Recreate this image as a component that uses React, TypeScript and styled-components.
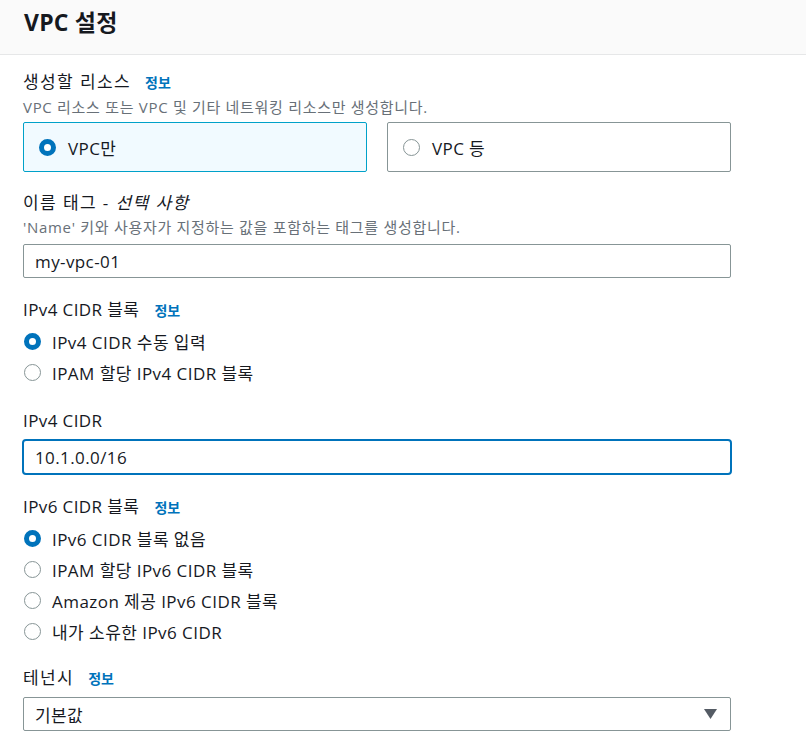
import React from "react";
import styled, { createGlobalStyle } from "styled-components";

const Global = createGlobalStyle`
  html, body { margin: 0; padding: 0; background: #ffffff; }
  body { font-family: "Open Sans", "Noto Sans CJK KR", sans-serif; color: #16191f; }
  * { box-sizing: border-box; }
`;

const Page = styled.div`
  width: 806px;
  min-height: 748px;
  background: #fff;
`;

const Header = styled.div`
  height: 55px;
  background: #fafafa;
  border-bottom: 1px solid #e6e7e8;
  padding: 4px 24px 0;
`;

const Title = styled.h2`
  margin: 0;
  font-size: 23px;
  font-weight: 700;
  line-height: 36px;
  letter-spacing: 0.2px;
  color: #16191f;
`;

const Body = styled.div`
  width: 731px;
  padding: 14px 0 0 23px;
  display: flex;
  flex-direction: column;
`;

const Field = styled.div<{ $gap?: number }>`
  display: flex;
  flex-direction: column;
  margin-bottom: ${(p) => p.$gap ?? 19}px;
`;

const LabelRow = styled.div<{ $wide?: boolean }>`
  display: flex;
  align-items: baseline;
  gap: ${(p) => (p.$wide ? 14 : 15)}px;
  font-size: 17px;
  font-weight: 400;
  letter-spacing: ${(p) => (p.$wide ? 1.4 : 0.4)}px;
  line-height: 26px;
  color: #16191f;
`;

const Optional = styled.i`
  font-style: italic;
`;

const Info = styled.a`
  font-size: 14px;
  font-weight: 600;
  letter-spacing: 0;
  color: #0073bb;
  text-decoration: none;
`;

const Desc = styled.div<{ $after?: number }>`
  font-size: 15px;
  letter-spacing: 0.7px;
  line-height: 22px;
  color: #687078;
  margin-bottom: ${(p) => p.$after ?? 6}px;
`;

const Tiles = styled.div`
  display: grid;
  grid-template-columns: 1fr 1fr;
  gap: 20px;
`;

const Tile = styled.div<{ $selected?: boolean }>`
  height: 50px;
  display: flex;
  align-items: center;
  gap: 12px;
  padding-left: 15px;
  border: 1px solid ${(p) => (p.$selected ? "#00a1c9" : "#879596")};
  background: ${(p) => (p.$selected ? "#f1faff" : "#fff")};
  border-radius: 2px;
  font-size: 17px;
  letter-spacing: 0.4px;
`;

const Radio = styled.span<{ $checked?: boolean }>`
  width: 17px;
  height: 17px;
  border-radius: 50%;
  flex: none;
  border: ${(p) => (p.$checked ? "5px solid #0073bb" : "1.5px solid #879596")};
  background: #fff;
`;

const RadioList = styled.div`
  display: flex;
  flex-direction: column;
  margin-top: 2px;
`;

const RadioRow = styled.div`
  display: flex;
  align-items: center;
  gap: 11px;
  height: 31px;
  font-size: 17px;
  letter-spacing: 0.45px;
  padding-left: 1px;
`;

const Input = styled.div<{ $focused?: boolean }>`
  height: ${(p) => (p.$focused ? 36 : 34)}px;
  margin: ${(p) => (p.$focused ? "0 -1px" : "0")};
  border: ${(p) => (p.$focused ? "2px solid #0073bb" : "1px solid #879596")};
  border-radius: ${(p) => (p.$focused ? 4 : 2)}px;
  display: flex;
  align-items: center;
  padding-left: 11px;
  font-size: 17px;
  letter-spacing: 0.4px;
  color: #16191f;
`;

const Select = styled(Input)`
  justify-content: space-between;
  padding-right: 13px;
`;

const Caret = styled.svg`
  width: 13px;
  height: 10px;
`;

const Spacer = styled.div`
  height: 5px;
`;

export default function App() {
  return (
    <Page>
      <Global />
      <Header>
        <Title>VPC 설정</Title>
      </Header>
      <Body>
        <Field $gap={18}>
          <LabelRow $wide>
            생성할 리소스 <Info>정보</Info>
          </LabelRow>
          <Desc $after={4}>VPC 리소스 또는 VPC 및 기타 네트워킹 리소스만 생성합니다.</Desc>
          <Tiles>
            <Tile $selected>
              <Radio $checked />
              VPC만
            </Tile>
            <Tile>
              <Radio />
              VPC 등
            </Tile>
          </Tiles>
        </Field>
        <Field>
          <LabelRow $wide>
            <span>
              이름 태그 - <Optional>선택 사항</Optional>
            </span>
          </LabelRow>
          <Desc>'Name' 키와 사용자가 지정하는 값을 포함하는 태그를 생성합니다.</Desc>
          <Input>my-vpc-01</Input>
        </Field>
        <Field $gap={20}>
          <LabelRow>
            IPv4 CIDR 블록 <Info>정보</Info>
          </LabelRow>
          <RadioList>
            <RadioRow>
              <Radio $checked />
              IPv4 CIDR 수동 입력
            </RadioRow>
            <RadioRow>
              <Radio />
              IPAM 할당 IPv4 CIDR 블록
            </RadioRow>
          </RadioList>
        </Field>
        <Field>
          <LabelRow>IPv4 CIDR</LabelRow>
          <Spacer />
          <Input $focused>10.1.0.0/16</Input>
        </Field>
        <Field $gap={18}>
          <LabelRow>
            IPv6 CIDR 블록 <Info>정보</Info>
          </LabelRow>
          <RadioList>
            <RadioRow>
              <Radio $checked />
              IPv6 CIDR 블록 없음
            </RadioRow>
            <RadioRow>
              <Radio />
              IPAM 할당 IPv6 CIDR 블록
            </RadioRow>
            <RadioRow>
              <Radio />
              Amazon 제공 IPv6 CIDR 블록
            </RadioRow>
            <RadioRow>
              <Radio />
              내가 소유한 IPv6 CIDR
            </RadioRow>
          </RadioList>
        </Field>
        <Field>
          <LabelRow $wide>
            테넌시 <Info>정보</Info>
          </LabelRow>
          <Spacer />
          <Select>
            기본값
            <Caret viewBox="0 0 13 10">
              <path d="M0 0 H13 L6.5 10 Z" fill="#545b64" />
            </Caret>
          </Select>
        </Field>
      </Body>
    </Page>
  );
}
